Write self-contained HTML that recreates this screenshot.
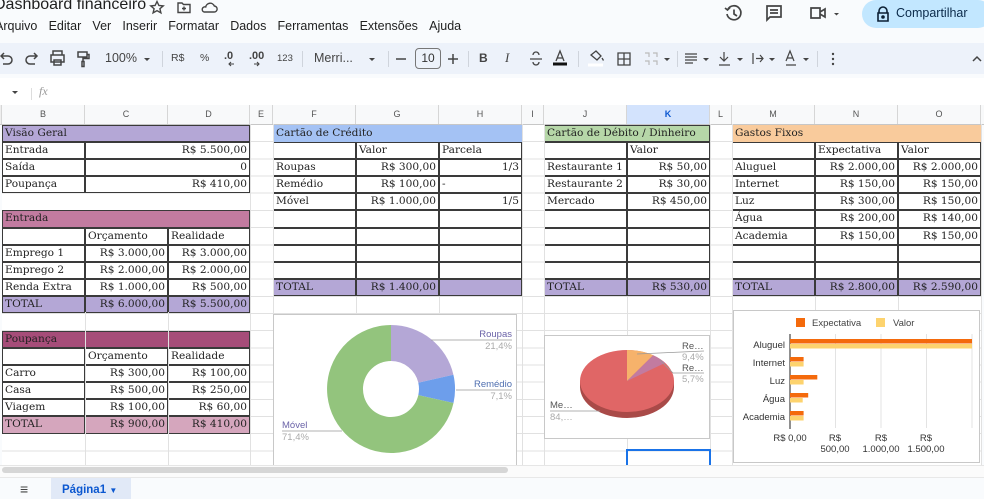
<!DOCTYPE html>
<html><head><meta charset="utf-8"><style>
*{box-sizing:border-box;margin:0;padding:0}
body{width:984px;height:499px;overflow:hidden;background:#f9fbfd;font-family:"Liberation Sans",sans-serif;position:relative;color:#1f1f1f}
.a{position:absolute;white-space:nowrap}
.menu span{margin-right:11.2px}
#grid{position:absolute;left:2px;top:124.5px;width:979px;height:343px;display:grid;
grid-template-columns:83px 83px 82px 23px 83px 83px 83px 22px 83px 83px 22px 83px 83px 83px;
grid-template-rows:repeat(20,17.18px);background:#fff;
background-image:repeating-linear-gradient(to bottom,transparent 0 16.18px,#e1e1e1 16.18px 17.18px);
font-family:"DejaVu Serif","Liberation Serif",serif;font-size:10.6px;color:#222}
.v{position:absolute;top:105px;height:361px;width:1px;background:#e1e1e1}
.t{box-shadow:inset 0 0 0 1px #3a3a3a;background:#fff;line-height:17.5px;padding:0 3px;white-space:nowrap;overflow:hidden}
.r{text-align:right}
.hp{background:#b4a7d6}.hb{background:#a4c2f4}.hg{background:#b6d7a8}.ho{background:#f9cb9c}
.he{background:#c27ba0}.hq{background:#a64d79}.tp{background:#b4a7d6}.tq{background:#d5a6bd}
#ch{position:absolute;left:0;top:105px;width:984px;height:19.5px;background:#f8f9fa;border-bottom:1px solid #c7c7c7;font-size:9px;color:#555}
#ch div{position:absolute;top:0;line-height:19px;text-align:center;border-right:1px solid #d6d6d6;height:19px}
.tb{font-size:11.5px;color:#444;top:52px}
</style></head><body>
<!-- title -->
<div class="a" style="left:-6px;top:-4px;font-size:16px;color:#1f1f1f">Dashboard financeiro</div>
<svg class="a" style="left:148px;top:0" width="75" height="16" viewBox="0 0 75 16" fill="none" stroke="#444" stroke-width="1.4">
<path d="M9 1.5l1.9 4 4.3.4-3.3 2.8 1 4.2L9 10.7 5.1 12.9l1-4.2L2.8 5.9l4.3-.4z"/>
<path d="M30 3h4l1.5 1.5H42v8H30z M36 6.5v4 M34 8.5h4"/>
<path d="M56 12h10a3 3 0 0 0 .3-6 4.5 4.5 0 0 0-8.6 1A2.6 2.6 0 0 0 56 12z"/></svg>
<div class="a menu" style="left:-5px;top:19px;font-size:12.5px;color:#1f1f1f"><span>Arquivo</span><span>Editar</span><span>Ver</span><span>Inserir</span><span>Formatar</span><span>Dados</span><span>Ferramentas</span><span>Extensões</span><span>Ajuda</span></div>
<!-- right header -->
<svg class="a" style="left:722px;top:2px" width="130" height="24" viewBox="0 0 130 24" fill="none" stroke="#444" stroke-width="1.7">
<path d="M6 7a7 7 0 1 1-1 5 M3 6l2.5 2L8 5.5 M12 7.5v4.5l3 2"/>
<path d="M45 4h14v11h-11l-3 3z M48 8h8 M48 11h8"/>
<path d="M89 6h9v10h-9z M98 10l5-3v8l-5-3"/>
<path d="M112 11l2.5 2.5 2.5-2.5z" fill="#444" stroke="none"/></svg>
<div class="a" style="left:862px;top:0;width:130px;height:28px;border-radius:14px;background:#c2e7ff"></div>
<svg class="a" style="left:876px;top:6px" width="14" height="16" viewBox="0 0 14 16" fill="none" stroke="#0b1f33" stroke-width="1.6"><path d="M3 7V5a4 4 0 0 1 8 0v2 M2 7h10v8H2z"/><circle cx="7" cy="11" r="1" fill="#0b1f33"/></svg>
<div class="a" style="left:896px;top:6px;font-size:12.5px;color:#0b2a4a">Compartilhar</div>
<!-- toolbar -->
<div class="a" style="left:-20px;top:43px;width:1024px;height:31px;border-radius:16px;background:#edf2fa"></div>
<svg class="a" style="left:0;top:48px" width="984" height="22" viewBox="0 0 984 22" fill="none" stroke="#444" stroke-width="1.5">
<path d="M2 8h6a4 4 0 0 1 0 8H3 M4 5L1 8l3 3"/>
<path d="M36 8h-6a4 4 0 0 0 0 8h5 M34 5l3 3-3 3"/>
<path d="M53 7V3h9v4 M51 7h13v7h-13z M54 12h7v5h-7z"/>
<path d="M78 4h9v5h-9z M87 6.5h2v4h-6v3 M82 13.5h2v5h-2z"/>
<path d="M144 10l3 3 3-3z M369 10l3 3 3-3z M664 10l3 3 3-3z M703 10l3 3 3-3z M737 10l3 3 3-3z M769 10l3 3 3-3z M803 10l3 3 3-3z" fill="#444" stroke="none"/>
<path d="M162.5 3v16 M302.5 3v16 M388.5 3v16 M468.5 3v16 M578.5 3v16 M677.5 3v16 M817.5 3v16" stroke="#cfd4dc" stroke-width="1"/>
<path d="M396 11h10 M448 11h10 M453 6v10"/>
<path d="M530 11h12 M533 7a3 3 0 0 1 6 0 M533 14a3 3 0 0 0 6 0" stroke-width="1.3"/>
<path d="M556 13l4-10 4 10 M557.5 10h5" stroke-width="1.3"/><path d="M553 16h14" stroke="#111" stroke-width="3"/>
<path d="M591 7l5-4 5 5-4 4z M602 10l1.5 2.5" stroke-width="1.3"/><path d="M588 17h15" stroke="#fff" stroke-width="3"/>
<path d="M618 5h12v12h-12z M624 5v12 M618 11h12" stroke-width="1.3"/>
<path d="M645 5h4v4 M645 13h4v4 M653 5h4v4 M653 13h4v4" stroke="#bbb" stroke-width="1.2"/>
<path d="M685 6h12 M685 9h12 M685 12h12 M685 15h8" stroke-width="1.2"/>
<path d="M724 4v9 M720 9l4 4 4-4 M719 17h11" stroke-width="1.2"/>
<path d="M753 5v11 M756 10.5h7 M760 7l3 3.5-3 3.5" stroke-width="1.2"/>
<path d="M786 13l4-10 4 10 M787.5 10h5 M786 17h10" stroke-width="1.2"/>
<circle cx="833" cy="6" r="1.2" fill="#444" stroke="none"/><circle cx="833" cy="11" r="1.2" fill="#444" stroke="none"/><circle cx="833" cy="16" r="1.2" fill="#444" stroke="none"/>
<path d="M973 13l4-4 4 4"/>
<path d="M229 16h5 M231 14l-2 2 2 2 M254 16h5 M257 14l2 2-2 2" stroke-width="1.1"/></svg>
<div class="a tb" style="left:105px;font-size:12.5px;top:51px">100%</div>
<div class="a tb" style="left:171px;font-size:10.5px">R$</div>
<div class="a tb" style="left:200px;font-size:10.5px">%</div>
<div class="a tb" style="left:224px;font-size:11px;font-weight:bold;top:50px">.0</div>
<div class="a tb" style="left:249px;font-size:11px;font-weight:bold;top:50px">.00</div>
<div class="a tb" style="left:277px;font-size:9.5px;top:53px">123</div>
<div class="a tb" style="left:314px;font-size:12.5px;top:51px">Merri...</div>
<div class="a" style="left:415px;top:48px;width:26px;height:21px;border:1px solid #777;border-radius:4px;font-size:12px;text-align:center;line-height:19px;color:#333">10</div>
<div class="a tb" style="left:479px;font-size:12px;font-weight:bold;top:51px">B</div>
<div class="a tb" style="left:505px;font-size:13px;font-style:italic;font-family:'Liberation Serif',serif;top:50px">I</div>
<!-- formula bar -->
<div class="a" style="left:0;top:78px;width:984px;height:27px;background:#fff"></div>
<svg class="a" style="left:10px;top:88px" width="30" height="12"><path d="M2 3l3 3 3-3z" fill="#444"/><path d="M21.5 0v12" stroke="#ddd"/></svg>
<div class="a" style="left:39px;top:84px;font-size:12px;font-style:italic;color:#999;font-family:'Liberation Serif',serif">fx</div>
<!-- column header -->
<div id="ch">
<div style="left:0;width:2px;background:#eee"></div>
<div style="left:2px;width:83px">B</div><div style="left:85px;width:83px">C</div><div style="left:168px;width:82px">D</div><div style="left:250px;width:23px">E</div><div style="left:273px;width:83px">F</div><div style="left:356px;width:83px">G</div><div style="left:439px;width:83px">H</div><div style="left:522px;width:22px">I</div><div style="left:544px;width:83px">J</div><div style="left:627px;width:83px;background:#d3e3fd;color:#0b57d0;font-weight:bold">K</div><div style="left:710px;width:22px">L</div><div style="left:732px;width:83px">M</div><div style="left:815px;width:83px">N</div><div style="left:898px;width:83px">O</div>
</div>
<div id="grid">
<div class="t hp" style="grid-area:1/1/2/4">Visão Geral</div>
<div class="t" style="grid-area:2/1">Entrada</div><div class="t r" style="grid-area:2/2/3/4">R$ 5.500,00</div>
<div class="t" style="grid-area:3/1">Saída</div><div class="t r" style="grid-area:3/2/4/4">0</div>
<div class="t" style="grid-area:4/1">Poupança</div><div class="t r" style="grid-area:4/2/5/4">R$ 410,00</div>
<div class="t he" style="grid-area:6/1/7/4">Entrada</div>
<div class="t" style="grid-area:7/1"></div><div class="t" style="grid-area:7/2">Orçamento</div><div class="t" style="grid-area:7/3">Realidade</div>
<div class="t" style="grid-area:8/1">Emprego 1</div><div class="t r" style="grid-area:8/2">R$ 3.000,00</div><div class="t r" style="grid-area:8/3">R$ 3.000,00</div>
<div class="t" style="grid-area:9/1">Emprego 2</div><div class="t r" style="grid-area:9/2">R$ 2.000,00</div><div class="t r" style="grid-area:9/3">R$ 2.000,00</div>
<div class="t" style="grid-area:10/1">Renda Extra</div><div class="t r" style="grid-area:10/2">R$ 1.000,00</div><div class="t r" style="grid-area:10/3">R$ 500,00</div>
<div class="t tp" style="grid-area:11/1">TOTAL</div><div class="t r tp" style="grid-area:11/2">R$ 6.000,00</div><div class="t r tp" style="grid-area:11/3">R$ 5.500,00</div>
<div style="grid-area:12/2;border-left:1.5px solid #444;border-right:1.5px solid #444;margin-right:-1px"></div>
<div class="t hq" style="grid-area:13/1/14/4">Poupança</div>
<div class="t" style="grid-area:14/1"></div><div class="t" style="grid-area:14/2">Orçamento</div><div class="t" style="grid-area:14/3">Realidade</div>
<div class="t" style="grid-area:15/1">Carro</div><div class="t r" style="grid-area:15/2">R$ 300,00</div><div class="t r" style="grid-area:15/3">R$ 100,00</div>
<div class="t" style="grid-area:16/1">Casa</div><div class="t r" style="grid-area:16/2">R$ 500,00</div><div class="t r" style="grid-area:16/3">R$ 250,00</div>
<div class="t" style="grid-area:17/1">Viagem</div><div class="t r" style="grid-area:17/2">R$ 100,00</div><div class="t r" style="grid-area:17/3">R$ 60,00</div>
<div class="t tq" style="grid-area:18/1">TOTAL</div><div class="t r tq" style="grid-area:18/2">R$ 900,00</div><div class="t r tq" style="grid-area:18/3">R$ 410,00</div>
<div class="t hb" style="grid-area:1/5/2/8;box-shadow:none">Cartão de Crédito</div>
<div class="t" style="grid-area:2/5"></div><div class="t" style="grid-area:2/6">Valor</div><div class="t" style="grid-area:2/7">Parcela</div>
<div class="t" style="grid-area:3/5">Roupas</div><div class="t r" style="grid-area:3/6">R$ 300,00</div><div class="t r" style="grid-area:3/7">1/3</div>
<div class="t" style="grid-area:4/5">Remédio</div><div class="t r" style="grid-area:4/6">R$ 100,00</div><div class="t" style="grid-area:4/7">-</div>
<div class="t" style="grid-area:5/5">Móvel</div><div class="t r" style="grid-area:5/6">R$ 1.000,00</div><div class="t r" style="grid-area:5/7">1/5</div>
<div class="t" style="grid-area:6/5"></div><div class="t" style="grid-area:6/6"></div><div class="t" style="grid-area:6/7"></div>
<div class="t" style="grid-area:7/5"></div><div class="t" style="grid-area:7/6"></div><div class="t" style="grid-area:7/7"></div>
<div class="t" style="grid-area:8/5"></div><div class="t" style="grid-area:8/6"></div><div class="t" style="grid-area:8/7"></div>
<div class="t" style="grid-area:9/5"></div><div class="t" style="grid-area:9/6"></div><div class="t" style="grid-area:9/7"></div>
<div class="t tp" style="grid-area:10/5">TOTAL</div><div class="t r tp" style="grid-area:10/6">R$ 1.400,00</div><div class="t tp" style="grid-area:10/7"></div>
<div class="t hg" style="grid-area:1/9/2/11">Cartão de Débito / Dinheiro</div>
<div class="t" style="grid-area:2/9"></div><div class="t" style="grid-area:2/10">Valor</div>
<div class="t" style="grid-area:3/9">Restaurante 1</div><div class="t r" style="grid-area:3/10">R$ 50,00</div>
<div class="t" style="grid-area:4/9">Restaurante 2</div><div class="t r" style="grid-area:4/10">R$ 30,00</div>
<div class="t" style="grid-area:5/9">Mercado</div><div class="t r" style="grid-area:5/10">R$ 450,00</div>
<div class="t" style="grid-area:6/9"></div><div class="t" style="grid-area:6/10"></div>
<div class="t" style="grid-area:7/9"></div><div class="t" style="grid-area:7/10"></div>
<div class="t" style="grid-area:8/9"></div><div class="t" style="grid-area:8/10"></div>
<div class="t" style="grid-area:9/9"></div><div class="t" style="grid-area:9/10"></div>
<div class="t tp" style="grid-area:10/9">TOTAL</div><div class="t r tp" style="grid-area:10/10">R$ 530,00</div>
<div class="t ho" style="grid-area:1/12/2/15;box-shadow:none">Gastos Fixos</div>
<div class="t" style="grid-area:2/12"></div><div class="t" style="grid-area:2/13">Expectativa</div><div class="t" style="grid-area:2/14">Valor</div>
<div class="t" style="grid-area:3/12">Aluguel</div><div class="t r" style="grid-area:3/13">R$ 2.000,00</div><div class="t r" style="grid-area:3/14">R$ 2.000,00</div>
<div class="t" style="grid-area:4/12">Internet</div><div class="t r" style="grid-area:4/13">R$ 150,00</div><div class="t r" style="grid-area:4/14">R$ 150,00</div>
<div class="t" style="grid-area:5/12">Luz</div><div class="t r" style="grid-area:5/13">R$ 300,00</div><div class="t r" style="grid-area:5/14">R$ 150,00</div>
<div class="t" style="grid-area:6/12">Água</div><div class="t r" style="grid-area:6/13">R$ 200,00</div><div class="t r" style="grid-area:6/14">R$ 140,00</div>
<div class="t" style="grid-area:7/12">Academia</div><div class="t r" style="grid-area:7/13">R$ 150,00</div><div class="t r" style="grid-area:7/14">R$ 150,00</div>
<div class="t" style="grid-area:8/12"></div><div class="t" style="grid-area:8/13"></div><div class="t" style="grid-area:8/14"></div>
<div class="t" style="grid-area:9/12"></div><div class="t" style="grid-area:9/13"></div><div class="t" style="grid-area:9/14"></div>
<div class="t tp" style="grid-area:10/12">TOTAL</div><div class="t r tp" style="grid-area:10/13">R$ 2.800,00</div><div class="t r tp" style="grid-area:10/14">R$ 2.590,00</div>
</div>
<div class="v" style="left:85px;top:312px;height:154px"></div><div class="v" style="left:168px;top:312px;height:154px"></div><div class="v" style="left:250px;top:124px"></div><div class="v" style="left:273px;top:124px;height:190px"></div><div class="v" style="left:522px;top:124px"></div><div class="v" style="left:544px;top:124px"></div><div class="v" style="left:627px;top:296px;height:39px"></div><div class="v" style="left:627px;top:439px;height:27px"></div><div class="v" style="left:710px;top:124px"></div><div class="v" style="left:732px;top:124px"></div><div class="v" style="left:981px;top:124px"></div><div class="v" style="left:356px;top:296px;height:18px"></div><div class="v" style="left:439px;top:296px;height:18px"></div><div class="v" style="left:815px;top:296px;height:14px"></div><div class="v" style="left:898px;top:296px;height:14px"></div>
<svg class="a" style="left:0;top:0" width="984" height="499" viewBox="0 0 984 499" font-family="Liberation Sans,sans-serif">
<rect x="273.5" y="314.5" width="243" height="160" fill="#fff" stroke="#c8c8c8"/>
<path d="M391,325 A64,64 0 0 1 453.4,374.7 L418.3,382.7 A28,28 0 0 0 391,361 Z" fill="#b4a7d6"/>
<path d="M453.4,374.7 A64,64 0 0 1 453.5,403 L418.3,395.1 A28,28 0 0 0 418.3,382.7 Z" fill="#6d9eeb"/>
<path d="M453.5,403 A64,64 0 1 1 391,325 L391,361 A28,28 0 1 0 418.3,395.1 Z" fill="#93c47d"/>
<g font-size="9.5">
<text x="512" y="337" text-anchor="end" fill="#6b63a8">Roupas</text><text x="512" y="349" text-anchor="end" fill="#aaa">21,4%</text>
<text x="512" y="387" text-anchor="end" fill="#4f6fb0">Remédio</text><text x="512" y="399" text-anchor="end" fill="#aaa">7,1%</text>
<text x="282" y="428" fill="#6b63a8">Móvel</text><text x="282" y="440" fill="#aaa">71,4%</text></g>
<path d="M431 340H512 M456 390H512 M282 431H342" stroke="#999" stroke-width="0.8" fill="none"/>
<rect x="544.5" y="335.5" width="165" height="103" fill="#fff" stroke="#c8c8c8"/>
<ellipse cx="627" cy="387" rx="47" ry="31" fill="#a94a48"/>
<rect x="580" y="381" width="94" height="6" fill="#a94a48"/>
<ellipse cx="627" cy="381" rx="47" ry="31" fill="#e06666"/>
<path d="M627,381 L627,350 A47,31 0 0 1 653.1,355.2 Z" fill="#f6b26b"/>
<path d="M627,381 L653.1,355.2 A47,31 0 0 1 665.2,362.9 Z" fill="#c27ba0"/>
<g font-size="9.5"><text x="682" y="349" fill="#555">Re…</text><text x="682" y="360" fill="#aaa">9,4%</text><text x="682" y="371" fill="#555">Re…</text><text x="682" y="382" fill="#aaa">5,7%</text>
<text x="550" y="408" fill="#555">Me…</text><text x="550" y="420" fill="#aaa">84,…</text></g>
<path d="M637 354L704 351 M660 360L673 373H704 M550 411H600" stroke="#999" stroke-width="0.8" fill="none"/>
<rect x="627" y="450" width="83" height="20" fill="none" stroke="#1a73e8" stroke-width="2"/>
<rect x="733.5" y="310.5" width="246" height="152" fill="#fff" stroke="#c8c8c8"/>
<rect x="796" y="318" width="9" height="9" fill="#f46a0c"/><text x="812" y="326" font-size="9.5" fill="#444">Expectativa</text>
<rect x="876" y="318" width="9" height="9" fill="#fdd36e"/><text x="893" y="326" font-size="9.5" fill="#444">Valor</text>
<path d="M835.5 334V428 M881 334V428 M926.5 334V428 M972 334V428" stroke="#e3e3e3"/>
<path d="M790 334V429" stroke="#444" stroke-width="1.2"/>
<g fill="#f46a0c"><rect x="790" y="339" width="182" height="4.5"/><rect x="790" y="357" width="13.6" height="4.5"/><rect x="790" y="375" width="27.3" height="4.5"/><rect x="790" y="393" width="18.2" height="4.5"/><rect x="790" y="411" width="13.6" height="4.5"/></g>
<g fill="#fdd36e"><rect x="790" y="344" width="182" height="4.5"/><rect x="790" y="362" width="13.6" height="4.5"/><rect x="790" y="380" width="13.6" height="4.5"/><rect x="790" y="398" width="12.7" height="4.5"/><rect x="790" y="416" width="13.6" height="4.5"/></g>
<g font-size="9.5" fill="#333" text-anchor="end"><text x="785" y="348">Aluguel</text><text x="785" y="366">Internet</text><text x="785" y="384">Luz</text><text x="785" y="402">Água</text><text x="785" y="420">Academia</text></g>
<g font-size="9.5" fill="#333" text-anchor="middle"><text x="790" y="441">R$ 0,00</text><text x="835" y="441">R$</text><text x="835" y="452">500,00</text><text x="881" y="441">R$</text><text x="881" y="452">1.000,00</text><text x="926" y="441">R$</text><text x="926" y="452">1.500,00</text></g>
</svg>
<div class="a" style="left:0;top:465px;width:984px;height:12px;background:#fbfbfb;border-top:1px solid #e6e6e6"></div>
<div class="a" style="left:2px;top:467px;width:506px;height:6px;border-radius:3px;background:#d6d6d6"></div>
<div class="a" style="left:0;top:477px;width:984px;height:22px;background:#f9fbfd;border-top:1px solid #e8e8e8"></div>
<div class="a" style="left:20px;top:481px;font-size:14px;color:#444">≡</div>
<div class="a" style="left:51px;top:478px;width:80px;height:21px;background:#e1e9f7"></div>
<div class="a" style="left:62px;top:484px;font-size:11.5px;font-weight:bold;color:#0b57d0">Página1 <span style="font-size:8px">▼</span></div>
</body></html>
